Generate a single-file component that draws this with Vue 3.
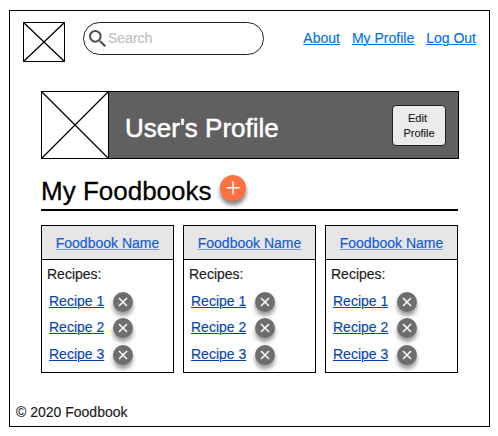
<script setup>
const navLinks = ['About', 'My Profile', 'Log Out']
const foodbooks = [1, 2, 3].map((id) => ({
  id,
  name: 'Foodbook Name',
  recipes: ['Recipe 1', 'Recipe 2', 'Recipe 3'],
}))
</script>

<template>
  <div class="page">
    <header class="topbar">
      <svg class="logo" viewBox="0 0 42 40">
        <rect x="0.5" y="0.5" width="41" height="39" />
        <path d="M.5.5l41 39M41.5.5l-41 39" />
      </svg>
      <label class="search">
        <svg class="search-icon" viewBox="3 3 17.5 17.5">
          <path d="M15.5 14h-.79l-.28-.27A6.47 6.47 0 0 0 16 9.5 6.5 6.5 0 1 0 9.5 16c1.61 0 3.09-.59 4.23-1.57l.27.28v.79l5 4.99L20.49 19l-4.99-5zm-6 0C7.01 14 5 11.99 5 9.5S7.01 5 9.5 5 14 7.01 14 9.5 11.99 14 9.5 14z" />
        </svg>
        <input type="text" placeholder="Search" />
      </label>
      <nav class="nav">
        <a v-for="link in navLinks" :key="link" href="#">{{ link }}</a>
      </nav>
    </header>

    <main class="main">
      <section class="banner">
        <svg class="avatar" viewBox="0 0 68 68">
          <rect x="0.5" y="0.5" width="67" height="67" />
          <path d="M.5.5l67 67M67.5.5l-67 67" />
        </svg>
        <h1>User's Profile</h1>
        <button class="edit"><span>Edit&nbsp;</span><span>Profile</span></button>
      </section>

      <div class="heading">
        <h2>My Foodbooks</h2>
        <button class="round add" aria-label="Add foodbook">
          <svg viewBox="0 0 26 26"><path d="M13 6.2v13.2M6.4 12.8h13.2" /></svg>
        </button>
      </div>

      <section class="cards">
        <article v-for="book in foodbooks" :key="book.id" class="card">
          <div class="card-head"><a href="#">{{ book.name }}</a></div>
          <div class="card-body">
            <p>Recipes:</p>
            <ul>
              <li v-for="recipe in book.recipes" :key="recipe">
                <a href="#">{{ recipe }}</a>
                <button class="round remove" aria-label="Remove recipe">
                  <svg viewBox="0 0 20 20"><path d="M6 6l8 8M14 6l-8 8" /></svg>
                </button>
              </li>
            </ul>
          </div>
        </article>
      </section>
    </main>

    <footer class="footer">© 2020 Foodbook</footer>
  </div>
</template>

<style>
body {
  background: #fff;
}
</style>

<style scoped>
.page,
.page * {
  box-sizing: border-box;
}
.page {
  display: flex;
  flex-direction: column;
  width: 481px;
  height: 417px;
  margin: 10px 0 0 9px;
  border: 1px solid #000;
  font: 14px/16px "Liberation Sans", Arial, sans-serif;
  color: #1a1a1a;
  -webkit-text-stroke: 0.15px currentColor;
}
h1,
h2,
p,
ul {
  margin: 0;
  padding: 0;
  font-weight: 400;
}
svg {
  display: block;
}
button {
  padding: 0;
  font-family: inherit;
}
.topbar {
  display: flex;
  align-items: flex-start;
  padding: 11px 13px 0;
}
.logo {
  width: 42px;
  height: 40px;
}
.logo,
.avatar {
  flex: none;
  fill: #fff;
  stroke: #000;
  stroke-width: 1;
}
.logo path,
.avatar path {
  stroke-width: 1.3;
}
.search {
  display: flex;
  align-items: center;
  width: 181px;
  height: 33px;
  margin-left: 18px;
  padding-left: 5px;
  border: 1px solid #222;
  border-radius: 17px;
}
.search-icon {
  flex: none;
  width: 17px;
  height: 17px;
  fill: #4d4d4d;
}
.search input {
  width: 130px;
  height: 16px;
  margin: 0 0 2px 2px;
  padding: 0;
  border: 0;
  outline: 0;
  background: transparent;
  font: inherit;
}
.search input::placeholder {
  color: #bdbdbd;
  opacity: 1;
}
.nav {
  display: flex;
  gap: 12px;
  margin: 8px 0 0 auto;
}
.nav a {
  color: #0070e8;
}
a {
  white-space: nowrap;
  text-underline-offset: 1px;
  text-decoration-thickness: 1px;
}
.main {
  width: 418px;
  margin: 29px 0 0 31px;
}
.banner {
  display: flex;
  align-items: center;
  height: 68px;
  background: #606060;
  box-shadow: inset 0 0 0 1px #000;
}
.avatar {
  width: 68px;
  height: 68px;
}
.banner h1 {
  margin: 6px 0 0 16px;
  font-size: 26px;
  line-height: 30px;
  color: #fff;
  -webkit-text-stroke: 0.5px #fff;
}
.edit {
  width: 54px;
  height: 41px;
  margin: 0 13px 0 auto;
  padding-top: 1px;
  border: 1px solid #1f1f1f;
  border-radius: 4px;
  background: #ebebeb;
  color: #1a1a1a;
  font-size: 11px;
  line-height: 15px;
}
.edit span {
  display: block;
}
.heading {
  display: flex;
  width: 417px;
  height: 52px;
  padding-top: 16px;
  border-bottom: 2px solid #000;
}
.heading h2 {
  height: 30px;
  margin-top: 1px;
  font-size: 26px;
  line-height: 30px;
  color: #000;
  -webkit-text-stroke: 0.3px #000;
}
.round {
  flex: none;
  border: 0;
  border-radius: 50%;
}
.round path {
  fill: none;
  stroke: #fff;
  stroke-width: 1.5;
}
.add {
  width: 26px;
  height: 26px;
  margin-left: 8px;
  background: #ff7043;
  box-shadow: 0 4px 4px rgba(0, 0, 0, 0.5);
}
.cards {
  display: flex;
  gap: 9px;
  margin-top: 14px;
}
.card {
  width: 133px;
  height: 148px;
  border: 1px solid #000;
}
.card-head {
  height: 34px;
  padding-top: 9px;
  border-bottom: 1px solid #000;
  background: #e6e6e6;
  text-align: center;
}
.card-head a {
  color: #1259d1;
  text-decoration-color: #6f9de6;
}
.card-body {
  padding: 6px 0 0 5px;
}
ul {
  margin: 10px 0 0 2px;
  list-style: none;
}
li {
  display: flex;
  align-items: center;
  height: 20px;
  margin-bottom: 6.3px;
}
li a {
  padding-bottom: 2px;
  color: #0645ad;
}
.remove {
  width: 20px;
  height: 20px;
  margin-left: 9px;
  background: #6e6e6e;
  box-shadow: 0 4px 4px rgba(0, 0, 0, 0.4);
}
.footer {
  margin: auto 0 6px 6px;
}
</style>
